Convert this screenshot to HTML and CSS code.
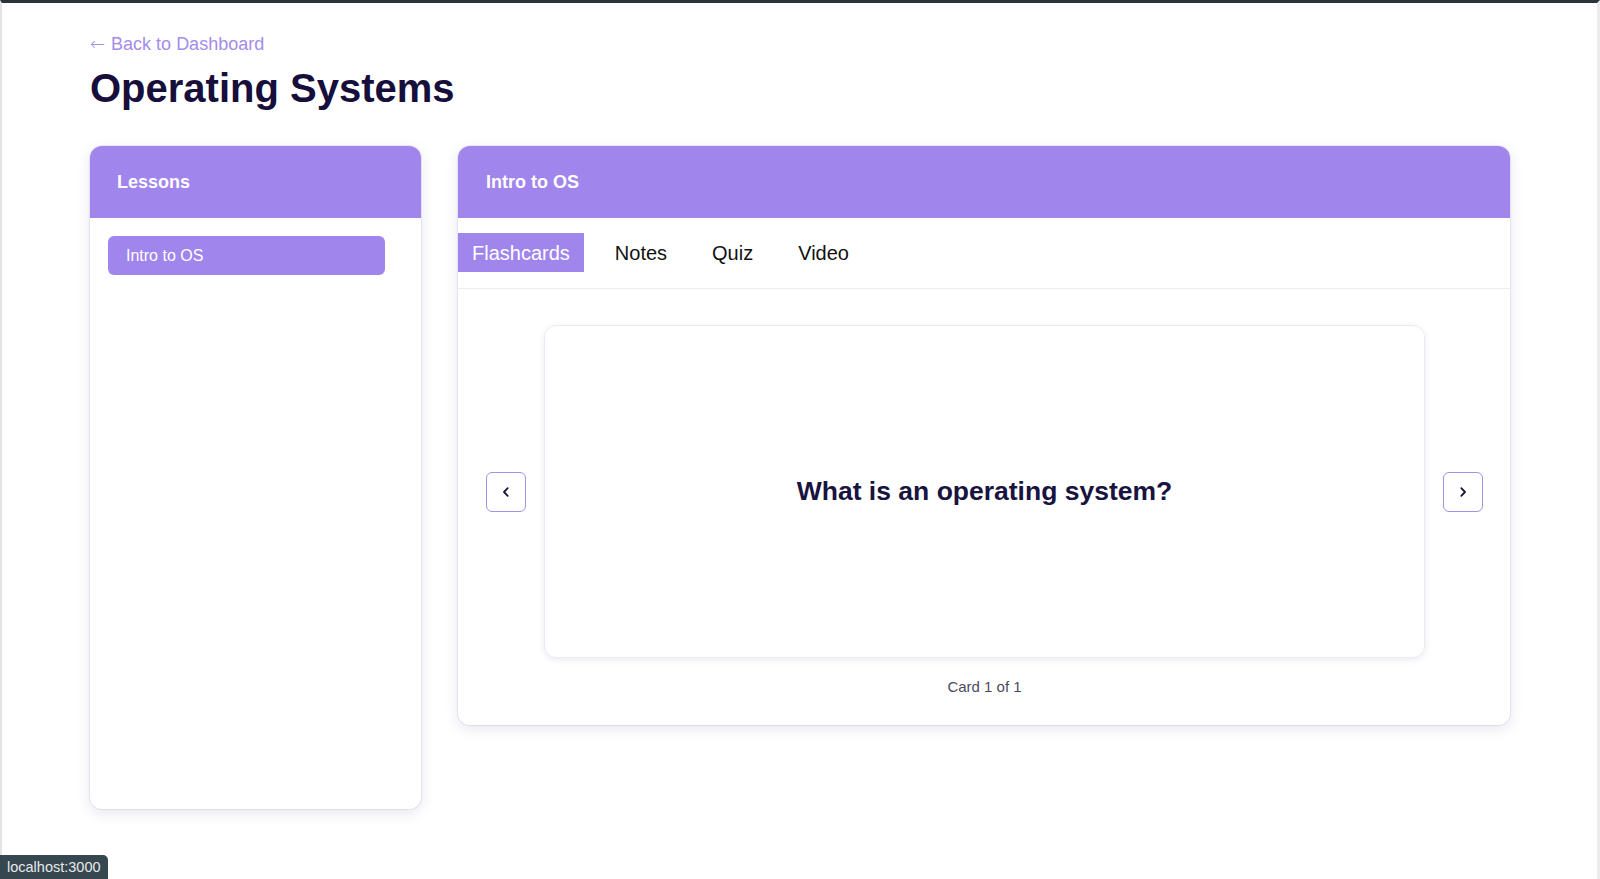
FILE: index.html
```html
<!DOCTYPE html>
<html lang="en">
<head>
<meta charset="utf-8">
<title>Operating Systems</title>
<link rel="stylesheet" href="styles.css">
</head>
<body>
<div class="window">
  <main class="page">
    <a class="back-link" href="#"><span class="arrow">&larr;</span> Back to Dashboard</a>
    <h1 class="title">Operating Systems</h1>
    <div class="layout">
      <aside class="card lessons">
        <div class="card-header">Lessons</div>
        <div class="lesson-list">
          <div class="lesson-item active">Intro to OS</div>
        </div>
      </aside>
      <section class="card lesson">
        <div class="card-header">Intro to OS</div>
        <nav class="tabs">
          <span class="tab active">Flashcards</span>
          <span class="tab">Notes</span>
          <span class="tab">Quiz</span>
          <span class="tab">Video</span>
        </nav>
        <div class="flash-area">
          <div class="flash-row">
            <button class="nav-btn" aria-label="Previous">
              <svg width="14" height="14" viewBox="0 0 14 14"><path d="M8.7 3.2 L5 7 L8.7 10.8" fill="none" stroke="#1a1535" stroke-width="1.8" stroke-linecap="round" stroke-linejoin="round"/></svg>
            </button>
            <div class="flashcard">What is an operating system?</div>
            <button class="nav-btn" aria-label="Next">
              <svg width="14" height="14" viewBox="0 0 14 14"><path d="M5.3 3.2 L9 7 L5.3 10.8" fill="none" stroke="#1a1535" stroke-width="1.8" stroke-linecap="round" stroke-linejoin="round"/></svg>
            </button>
          </div>
          <div class="counter">Card 1 of 1</div>
        </div>
      </section>
    </div>
  </main>
  <div class="status-url">localhost:3000</div>
</div>
</body>
</html>
```

FILE: styles.css
```css
* { box-sizing: border-box; }
html, body { margin: 0; padding: 0; background: #ffffff; }
body {
  font-family: "Liberation Sans", Arial, Helvetica, sans-serif;
  color: #171234;
}
.window {
  height: 879px;
  border-top: 3px solid #2a353a;
  border-left: 2px solid #e4e4e6;
  border-right: 3px solid #ebebed;
  background: #fff;
  overflow: hidden;
}
.page {
  padding: 30px 87px 0 88px;
  display: flex;
  flex-direction: column;
  align-items: flex-start;
}
.back-link {
  font-size: 18px;
  line-height: 21px;
  color: #a48ceb;
  text-decoration: none;
}
.back-link .arrow {
  font-family: "DejaVu Sans", sans-serif;
  font-size: 18px;
  font-weight: 300;
  margin-right: 1px;
}
.title {
  margin: 10px 0 0;
  font-size: 40px;
  line-height: 46px;
  font-weight: 700;
  color: #160e3b;
}
.layout {
  margin-top: 35px;
  display: flex;
  gap: 37px;
  align-items: flex-start;
  width: 100%;
}
.card {
  background: #fff;
  border-radius: 12px;
  box-shadow: 0 4px 14px rgba(60, 50, 120, 0.12), 0 0 0 1px rgba(200, 195, 230, 0.30);
  overflow: hidden;
}
.card-header {
  height: 72px;
  display: flex;
  align-items: center;
  background: #a085ed;
  color: #fff;
  font-size: 18px;
  font-weight: 700;
}
.lessons { width: 331px; height: 663px; flex: none; }
.lessons .card-header { padding-left: 27px; }
.lesson-list { padding: 18px; }
.lesson-item {
  width: 277px;
  height: 39px;
  display: flex;
  align-items: center;
  padding-left: 18px;
  border-radius: 6px;
  font-size: 16px;
  color: #fff;
  background: #a085ed;
}
.lesson { flex: 1; }
.lesson .card-header { padding-left: 28px; }
.tabs {
  display: flex;
  gap: 17px;
  padding: 15px 0 16px;
  border-bottom: 1px solid #ecebf3;
}
.tab {
  height: 39px;
  display: flex;
  align-items: center;
  padding: 1px 14px 0;
  font-size: 20px;
  color: #111;
}
.tab.active { background: #a085ed; color: #fff; }
.flash-area { padding: 36px 27px 29px 28px; }
.flash-row {
  display: flex;
  align-items: center;
  gap: 18px;
}
.nav-btn {
  width: 40px;
  height: 40px;
  flex: none;
  display: flex;
  align-items: center;
  justify-content: center;
  padding: 0;
  border: 1.5px solid #a291e6;
  border-radius: 6px;
  background: #fff;
}
.flashcard {
  flex: 1;
  height: 333px;
  display: flex;
  align-items: center;
  justify-content: center;
  border: 1px solid #ebeaf2;
  border-radius: 12px;
  box-shadow: 0 2px 6px rgba(60, 50, 120, 0.10);
  font-size: 26.5px;
  font-weight: 700;
  color: #19133f;
}
.counter {
  margin-top: 20px;
  text-align: center;
  font-size: 15px;
  line-height: 18px;
  color: #4a4a5c;
}
.status-url {
  position: fixed;
  left: 0;
  bottom: 0;
  height: 24px;
  padding: 0 7px;
  display: flex;
  align-items: center;
  background: #37474f;
  color: #e6e9eb;
  font-size: 14.5px;
  border-top-right-radius: 5px;
}
```
